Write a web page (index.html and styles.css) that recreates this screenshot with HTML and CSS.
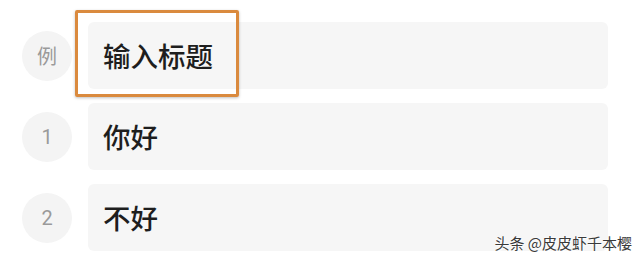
FILE: index.html
```html
<!DOCTYPE html>
<html lang="zh-CN">
<head>
    <meta charset="UTF-8">
    <meta name="viewport" content="width=device-width, initial-scale=1.0">
    <title>标题列表</title>
    <link rel="stylesheet" href="styles.css">
</head>
<body>
    <div class="list">
        <div class="row">
            <div class="num">例</div>
            <div class="field">
                <span class="title">输入标题</span>
                <div class="highlight"></div>
            </div>
        </div>
        <div class="row">
            <div class="num">1</div>
            <div class="field"><span class="title">你好</span></div>
        </div>
        <div class="row">
            <div class="num">2</div>
            <div class="field"><span class="title">不好</span></div>
        </div>
    </div>

    <!-- watermark -->
    <div class="watermark">头条 @皮皮虾千本樱</div>
</body>
</html>
```

FILE: styles.css
```css
body {
    margin: 0;
    background: #fff;
    font-family: "Noto Sans CJK SC", "Noto Sans", sans-serif;
    width: 640px;
    height: 260px;
    overflow: hidden;
    position: relative;
}
.list {
    display: flex;
    flex-direction: column;
    gap: 14px;
    padding: 22px 0 0 22px;
}
.row {
    display: flex;
    align-items: center;
    gap: 16px;
}
.num {
    width: 50px;
    height: 50px;
    border-radius: 50%;
    background: #f4f4f4;
    color: #9a9a9a;
    font-size: 20px;
    display: flex;
    align-items: center;
    justify-content: center;
    font-family: "Roboto", "Noto Sans CJK SC", sans-serif;
}
.field {
    position: relative;
    width: 520px;
    height: 67px;
    box-sizing: border-box;
    padding-left: 15px;
    background: #f6f6f6;
    border-radius: 6px;
    display: flex;
    align-items: center;
}
.title {
    font-size: 27.5px;
    font-weight: 500;
    color: #1e1e1e;
    line-height: 1;
}
.highlight {
    position: absolute;
    left: -13px;
    top: -12px;
    width: 164px;
    height: 87px;
    box-sizing: border-box;
    border: 3px solid #da8a3e;
    border-radius: 2px;
    box-shadow: 0 1px 3px rgba(0, 0, 0, 0.25);
}
.watermark {
    position: absolute;
    right: 8px;
    bottom: 7px;
    font-size: 15px;
    color: #3a3a3a;
    text-shadow: 0 0 2px #fff, 0 0 2px #fff, 1px 1px 1px #fff;
}
```
